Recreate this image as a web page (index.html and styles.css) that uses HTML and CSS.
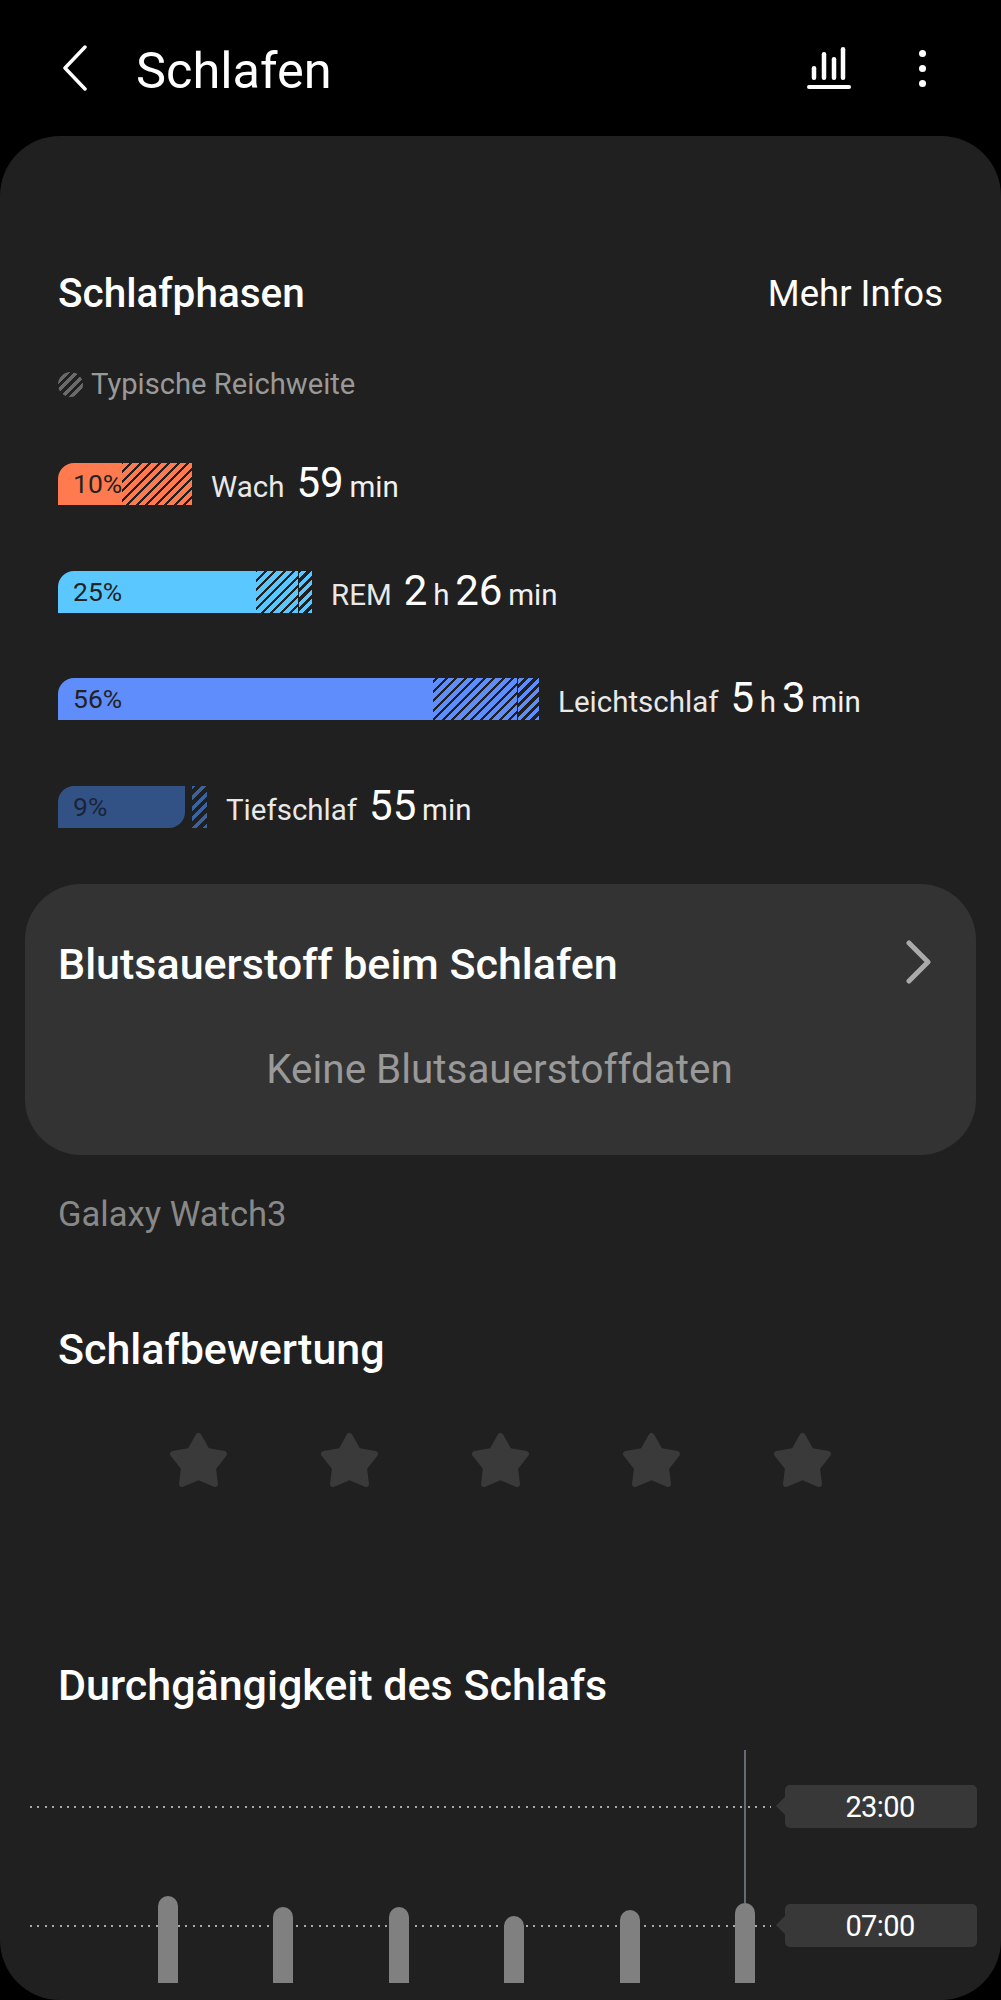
FILE: index.html
```html
<!DOCTYPE html>
<html lang="de">
<head>
    <meta charset="UTF-8">
    <meta name="viewport" content="width=device-width, initial-scale=1.0">
    <title>Schlafen</title>
    <link rel="stylesheet" href="styles.css">
</head>
<body>
    <header class="topbar">
        <svg class="back" width="24" height="46" viewBox="0 0 24 46"><polyline points="22,2 2,23 22,44"/></svg>
        <h1>Schlafen</h1>
        <svg class="chart-icon" width="44" height="42" viewBox="0 0 44 42">
            <rect x="4.75" y="19" width="4.5" height="14" rx="2.25"/>
            <rect x="14.75" y="5" width="4.5" height="28" rx="2.25"/>
            <rect x="24.75" y="10" width="4.5" height="23" rx="2.25"/>
            <rect x="33.75" y="0" width="4.5" height="33" rx="2.25"/>
            <rect x="0" y="38" width="44" height="4" rx="2"/>
        </svg>
        <div class="dots"><i></i><i></i><i></i></div>
    </header>

    <main class="panel">
        <div class="head-row">
            <h2>Schlafphasen</h2>
            <span class="more">Mehr Infos</span>
        </div>
        <div class="legend"><span class="legend-icon"></span>Typische Reichweite</div>

        <div class="phases">
            <div class="phase wach">
                <div class="bar">
                    <div class="fill">10%</div>
                    <div class="hatch"></div>
                </div>
                <div class="info">
                    <span class="name">Wach</span>
                    <span class="time"><b>59</b> min</span>
                </div>
            </div>
            <div class="phase rem">
                <div class="bar">
                    <div class="fill">25%</div>
                    <div class="hatch"></div>
                    <div class="hatch split"></div>
                </div>
                <div class="info">
                    <span class="name">REM</span>
                    <span class="time"><b>2</b> h <b>26</b> min</span>
                </div>
            </div>
            <div class="phase light">
                <div class="bar">
                    <div class="fill">56%</div>
                    <div class="hatch"></div>
                    <div class="hatch split"></div>
                </div>
                <div class="info">
                    <span class="name">Leichtschlaf</span>
                    <span class="time"><b>5</b> h <b>3</b> min</span>
                </div>
            </div>
            <div class="phase deep">
                <div class="bar">
                    <div class="fill">9%</div>
                    <div class="hatch"></div>
                </div>
                <div class="info">
                    <span class="name">Tiefschlaf</span>
                    <span class="time"><b>55</b> min</span>
                </div>
            </div>
        </div>

        <section class="card">
            <div class="card-head">
                <h2>Blutsauerstoff beim Schlafen</h2>
                <svg width="26" height="44" viewBox="0 0 26 44"><polyline points="3,3 22,22 3,41"/></svg>
            </div>
            <p class="empty">Keine Blutsauerstoffdaten</p>
        </section>

        <p class="source">Galaxy Watch3</p>

        <h2 class="rating-title">Schlafbewertung</h2>
        <div class="stars">
            <svg width="58" height="56" viewBox="0 0 58 56"><polygon points="28.5,4 37,19 54,22 43,36 45,52 28.5,45 12,52 14,36 3,22 20,19"/></svg>
            <svg width="58" height="56" viewBox="0 0 58 56"><polygon points="28.5,4 37,19 54,22 43,36 45,52 28.5,45 12,52 14,36 3,22 20,19"/></svg>
            <svg width="58" height="56" viewBox="0 0 58 56"><polygon points="28.5,4 37,19 54,22 43,36 45,52 28.5,45 12,52 14,36 3,22 20,19"/></svg>
            <svg width="58" height="56" viewBox="0 0 58 56"><polygon points="28.5,4 37,19 54,22 43,36 45,52 28.5,45 12,52 14,36 3,22 20,19"/></svg>
            <svg width="58" height="56" viewBox="0 0 58 56"><polygon points="28.5,4 37,19 54,22 43,36 45,52 28.5,45 12,52 14,36 3,22 20,19"/></svg>
        </div>

        <h2 class="steady-title">Durchgängigkeit des Schlafs</h2>
        <div class="chart">
            <div class="guide guide-top"></div>
            <div class="guide guide-bottom"></div>
            <div class="bars">
                <div style="height: 87px"></div>
                <div style="height: 76px"></div>
                <div style="height: 76px"></div>
                <div style="height: 67px"></div>
                <div style="height: 73px"></div>
                <div style="height: 80px"></div>
            </div>
            <div class="cursor"></div>
            <div class="flag flag-top">23:00</div>
            <div class="flag flag-bottom">07:00</div>
        </div>
    </main>
</body>
</html>
```

FILE: styles.css
```css
* {
    box-sizing: border-box;
}
body {
    font-family: Roboto, sans-serif;
    margin: 0;
    padding: 0;
    background-color: #000;
    color: #fff;
    height: 2000px;
    overflow: hidden;
}
h1, h2, p {
    margin: 0;
    font-weight: 500;
}
h2 {
    font-size: 43px;
    line-height: 48px;
}

/* header */
.topbar {
    display: flex;
    align-items: center;
    height: 136px;
    padding: 0 0 0 63px;
}
.back {
    fill: none;
    stroke: #fff;
    stroke-width: 3.5;
    stroke-linecap: round;
    stroke-linejoin: round;
}
h1 {
    font-size: 50.5px;
    font-weight: 400;
    margin: 5px 0 0 49px;
    flex: 1;
}
.chart-icon {
    fill: #fff;
}
.dots {
    display: flex;
    flex-direction: column;
    gap: 8px;
    margin: 0 75px 0 68px;
}
.dots i {
    display: block;
    width: 7px;
    height: 7px;
    border-radius: 50%;
    background-color: #fff;
}

/* panel */
.panel {
    background-color: #202020;
    height: 1864px;
    border-radius: 60px;
    padding-top: 133px;
}
.head-row {
    display: flex;
    justify-content: space-between;
    align-items: center;
    padding: 0 58px;
}
.head-row h2 {
    font-size: 40.5px;
}
.more {
    font-size: 36.5px;
}
.legend {
    display: flex;
    align-items: center;
    gap: 8px;
    font-size: 29.2px;
    line-height: 32px;
    color: #999;
    margin: 51px 0 0 58px;
}
.legend-icon {
    width: 25px;
    height: 25px;
    border-radius: 50%;
    background: repeating-linear-gradient(-45deg, #6a6a6a 0 3.5px, #202020 3.5px 6.7px);
}

/* sleep phases */
.phases {
    margin: 63px 0 0 58px;
}
.phase {
    display: flex;
    align-items: center;
    height: 42px;
    margin-bottom: 65.7px;
}
.phase:last-child {
    margin-bottom: 0;
}
.bar {
    display: flex;
    height: 42px;
    --tone: #fff;
}
.fill {
    background-color: var(--tone);
    border-top-left-radius: 16px;
    color: #222;
    font-size: 26.5px;
    line-height: 42px;
    padding-left: 15px;
    white-space: nowrap;
}
.hatch {
    background: repeating-linear-gradient(-45deg, var(--tone) 0 4.5px, #202020 4.5px 6.7px);
}
.hatch.split {
    border-left: 1px solid #202020;
    background: repeating-linear-gradient(-45deg, var(--tone) 0 3.5px, #202020 3.5px 6.7px);
}
.info {
    display: flex;
    align-items: baseline;
    margin: -3px 0 0 19px;
}
.name {
    font-size: 29.5px;
    color: #e8e8e8;
}
.time {
    font-size: 29.5px;
    color: #f0f0f0;
    margin-left: 12px;
    white-space: nowrap;
    word-spacing: -1.5px;
}
.time b {
    font-size: 42px;
    font-weight: 400;
    color: #fff;
}
.wach .bar { --tone: #ff7b4f; }
.rem .bar { --tone: #5ac8ff; }
.light .bar { --tone: #5f8dfb; }
.deep .bar { --tone: #325286; }
.wach .fill { width: 64px; }
.wach .hatch { width: 70px; }
.rem .fill { width: 198px; }
.rem .hatch { width: 42px; }
.rem .hatch.split { width: 14px; }
.light .fill { width: 375px; }
.light .hatch { width: 84px; }
.light .hatch.split { width: 22px; }
.deep .fill {
    width: 127px;
    border-bottom-right-radius: 16px;
    color: #1a2438;
}
.deep .hatch {
    width: 15px;
    margin-left: 7px;
    background: repeating-linear-gradient(-45deg, #3d639f 0 3.5px, #202020 3.5px 7.5px);
}

/* blood oxygen card */
.card {
    background-color: #333;
    border-radius: 56px;
    height: 271px;
    margin: 56px 25px 0;
    padding: 56px 44px 0 33px;
}
.card-head {
    display: flex;
    justify-content: space-between;
    align-items: center;
    height: 48px;
}
.card-head svg {
    fill: none;
    stroke: #aaa;
    stroke-width: 5;
    stroke-linecap: round;
    stroke-linejoin: round;
    margin-top: -5px;
}
.empty {
    font-size: 40.4px;
    font-weight: 400;
    line-height: 48px;
    color: #999;
    text-align: center;
    margin: 58px -9px 0 0;
}
.source {
    font-size: 34.6px;
    font-weight: 400;
    line-height: 40px;
    color: #888;
    margin: 39px 0 0 58px;
}

/* rating */
.rating-title {
    margin: 91px 0 0 58px;
}
.stars {
    display: flex;
    justify-content: center;
    gap: 93px;
    margin-top: 59px;
}
.stars svg {
    fill: #3a3a3a;
    stroke: #3a3a3a;
    stroke-width: 6;
    stroke-linejoin: round;
}

/* continuity chart */
.steady-title {
    margin: 173px 0 0 58px;
}
.chart {
    position: relative;
    height: 233px;
    margin-top: 41px;
}
.guide {
    position: absolute;
    left: 30px;
    width: 741px;
    height: 2px;
    background: repeating-linear-gradient(90deg, #aaa 0 2px, transparent 2px 7.4px);
}
.guide-top { top: 56px; }
.guide-bottom { top: 175px; }
.bars {
    position: relative;
    display: flex;
    align-items: flex-end;
    gap: 95.4px;
    height: 100%;
    padding-left: 158px;
}
.bars div {
    width: 20px;
    background-color: #808080;
    border-radius: 10px 10px 0 0;
}
.cursor {
    position: absolute;
    left: 744px;
    top: 0;
    width: 2px;
    height: 153px;
    background-color: #666b72;
}
.flag {
    position: absolute;
    left: 785px;
    width: 192px;
    height: 43px;
    border-radius: 5px;
    background-color: #383838;
    font-size: 29px;
    line-height: 45px;
    letter-spacing: -0.6px;
    text-align: center;
    padding-right: 2px;
}
.flag::before {
    content: "";
    position: absolute;
    left: -9px;
    top: 12px;
    border-style: solid;
    border-width: 9px 9px 9px 0;
    border-color: transparent #383838 transparent transparent;
}
.flag-top { top: 35px; }
.flag-bottom { top: 154px; }
```
